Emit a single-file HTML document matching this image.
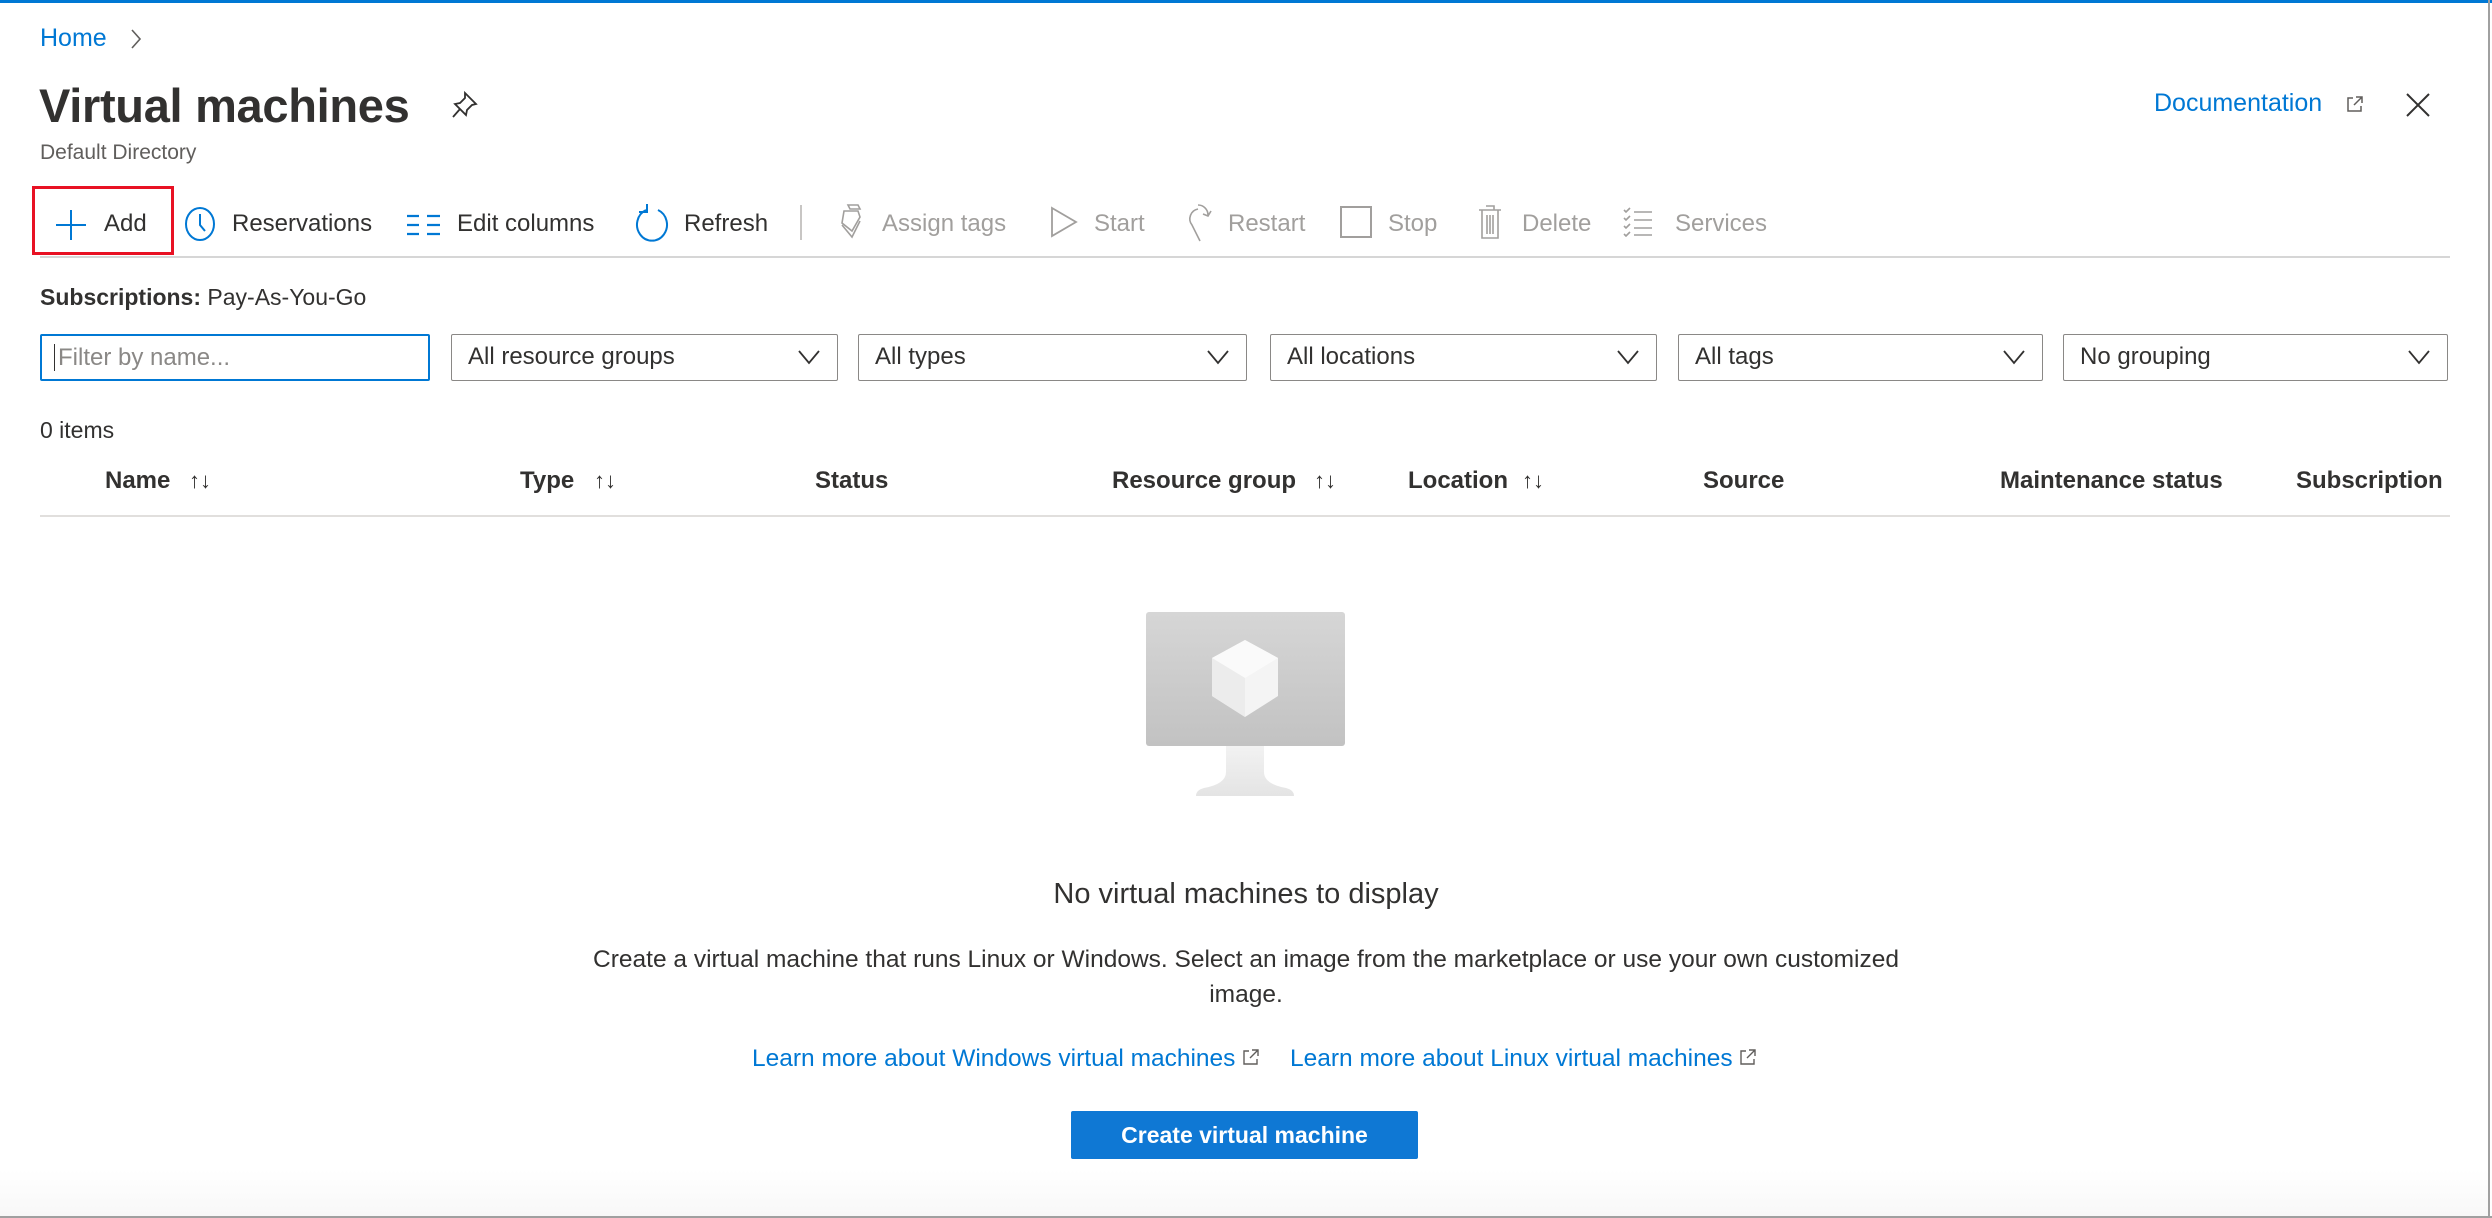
<!DOCTYPE html>
<html><head><meta charset="utf-8"><style>
*{margin:0;padding:0;box-sizing:border-box}
body{width:2492px;height:1218px;background:#fff;font-family:"Liberation Sans",sans-serif;color:#323130;position:relative;overflow:hidden}
.a{position:absolute;white-space:nowrap}
.tb{font-size:24px;top:209px;line-height:30px}
.dis{color:#a19f9d}
.sel{position:absolute;top:334px;height:47px;border:1.5px solid #8a8886;border-radius:2px;font-size:24px;line-height:44px;padding-left:16px}
.sel svg{position:absolute;right:16px;top:14px}
.th{font-size:24px;font-weight:bold;top:466px;line-height:30px;color:#323130}
.ar{font-size:22px;font-weight:normal;top:466px;line-height:30px}
.lnk{color:#0078d4}
</style></head><body>
<div class="a" style="left:0;top:1170px;width:2490px;height:46px;background:linear-gradient(#fff,#f8f8f8)"></div>
<div class="a" style="left:0;top:0;width:2492px;height:3px;background:#0078d4"></div>
<div class="a" style="right:2px;top:0;width:2px;height:1218px;background:#a0a0a0"></div>
<div class="a" style="left:0;bottom:0;width:2492px;height:2px;background:#a0a0a0"></div>

<div class="a lnk" style="left:40px;top:24px;font-size:25px">Home</div>
<svg class="a" style="left:130px;top:28px" width="12" height="22"><path d="M2 2 L10 11 L2 20" fill="none" stroke="#605e5c" stroke-width="1.6"/></svg>
<div class="a" style="left:39px;top:78px;font-size:47px;font-weight:bold;color:#323130;letter-spacing:-0.3px">Virtual machines</div>
<svg class="a" style="left:450px;top:90px" width="30" height="30" viewBox="0 0 30 30"><path d="M15 3 L26 14 L22 15 L17 20 L16 25 L5 14 L10 13 L15 8 Z M10 19 L3 27" fill="none" stroke="#323130" stroke-width="1.8"/></svg>
<div class="a" style="left:40px;top:141px;font-size:21px;color:#605e5c">Default Directory</div>
<div class="a lnk" style="left:2154px;top:89px;font-size:25px">Documentation</div>
<svg class="a" style="left:2345px;top:94px" width="20" height="20"><path d="M8 4 H3 V17 H16 V12 M11 3 H17 V9 M17 3 L9 11" fill="none" stroke="#605e5c" stroke-width="1.5"/></svg>
<svg class="a" style="left:2405px;top:92px" width="26" height="26"><path d="M2 2 L24 24 M24 2 L2 24" stroke="#323130" stroke-width="2"/></svg>

<!-- toolbar -->
<div class="a" style="left:32px;top:186px;width:142px;height:69px;border:3.5px solid #e81123"></div>
<svg class="a" style="left:55px;top:209px" width="32" height="32"><path d="M16 1 V31 M1 16 H31" stroke="#0078d4" stroke-width="2"/></svg>
<div class="a tb" style="left:104px">Add</div>
<svg class="a" style="left:183px;top:206px" width="34" height="36"><ellipse cx="17" cy="18" rx="14" ry="16" fill="none" stroke="#0078d4" stroke-width="2"/><path d="M17 8 V19 L22 25" fill="none" stroke="#0078d4" stroke-width="2"/></svg>
<div class="a tb" style="left:232px">Reservations</div>
<svg class="a" style="left:407px;top:213px" width="34" height="24"><path d="M0 3 H12 M20 3 H33 M0 12 H12 M20 12 H33 M0 21 H12 M20 21 H33" stroke="#0078d4" stroke-width="2.2"/></svg>
<div class="a tb" style="left:457px">Edit columns</div>
<svg class="a" style="left:634px;top:203px" width="36" height="42"><path d="M12 7 A15 16 0 1 0 24 7" fill="none" stroke="#0078d4" stroke-width="2"/><path d="M13 1 V9 H5" fill="none" stroke="#0078d4" stroke-width="2"/></svg>
<div class="a tb" style="left:684px">Refresh</div>
<div class="a" style="left:800px;top:205px;width:1.5px;height:35px;background:#c8c6c4"></div>
<svg class="a" style="left:838px;top:203px" width="26" height="38"><path d="M10 2 L20 2 L22 6 L12 6 Z M6 8 L20 8 L22 14 L14 28 L4 20 Z M4 22 L14 34 L22 18" fill="none" stroke="#a19f9d" stroke-width="1.6"/></svg>
<div class="a tb dis" style="left:882px">Assign tags</div>
<svg class="a" style="left:1050px;top:206px" width="28" height="32"><path d="M2 2 L26 16 L2 30 Z" fill="none" stroke="#a19f9d" stroke-width="1.8"/></svg>
<div class="a tb dis" style="left:1094px">Start</div>
<svg class="a" style="left:1186px;top:203px" width="28" height="40"><path d="M12 6 A10 10 0 0 0 6 22 L14 38" fill="none" stroke="#a19f9d" stroke-width="1.6"/><path d="M12 2 A10 10 0 0 1 22 12 M17 11 L22 13 L25 8" fill="none" stroke="#a19f9d" stroke-width="1.6"/></svg>
<div class="a tb dis" style="left:1228px">Restart</div>
<div class="a" style="left:1340px;top:206px;width:32px;height:32px;border:2px solid #a19f9d"></div>
<div class="a tb dis" style="left:1388px">Stop</div>
<svg class="a" style="left:1477px;top:204px" width="26" height="36"><path d="M9 2 H17 V6 M2 6 H24 M5 6 V34 H21 V6 M10 11 V30 M13 11 V30 M16 11 V30" fill="none" stroke="#a19f9d" stroke-width="1.6"/></svg>
<div class="a tb dis" style="left:1522px">Delete</div>
<svg class="a" style="left:1623px;top:207px" width="30" height="30"><path d="M1 3 L3 5 L7 1 M1 11 L3 13 L7 9 M1 19 L3 21 L7 17 M1 27 L3 29 L7 25 M11 5 H29 M11 13 H29 M11 21 H29 M11 28 H29" fill="none" stroke="#a19f9d" stroke-width="1.6"/></svg>
<div class="a tb dis" style="left:1675px">Services</div>
<div class="a" style="left:40px;top:256px;width:2410px;height:2px;background:#d6d6d6"></div>

<div class="a" style="left:40px;top:284px;font-size:23px"><b>Subscriptions:</b> Pay-As-You-Go</div>

<div class="sel" style="left:40px;width:390px;border:2px solid #0078d4;color:#8a8886"><span style="border-left:1.5px solid #323130;margin-left:-4px;padding-left:3px">Filter by name...</span></div>
<div class="sel" style="left:451px;width:387px">All resource groups<svg width="24" height="16"><path d="M2 2 L12 14 L22 2" fill="none" stroke="#323130" stroke-width="1.8"/></svg></div>
<div class="sel" style="left:858px;width:389px">All types<svg width="24" height="16"><path d="M2 2 L12 14 L22 2" fill="none" stroke="#323130" stroke-width="1.8"/></svg></div>
<div class="sel" style="left:1270px;width:387px">All locations<svg width="24" height="16"><path d="M2 2 L12 14 L22 2" fill="none" stroke="#323130" stroke-width="1.8"/></svg></div>
<div class="sel" style="left:1678px;width:365px">All tags<svg width="24" height="16"><path d="M2 2 L12 14 L22 2" fill="none" stroke="#323130" stroke-width="1.8"/></svg></div>
<div class="sel" style="left:2063px;width:385px">No grouping<svg width="24" height="16"><path d="M2 2 L12 14 L22 2" fill="none" stroke="#323130" stroke-width="1.8"/></svg></div>

<div class="a" style="left:40px;top:417px;font-size:23px">0 items</div>

<div class="a th" style="left:105px">Name</div><div class="a ar" style="left:189px">↑↓</div>
<div class="a th" style="left:520px">Type</div><div class="a ar" style="left:594px">↑↓</div>
<div class="a th" style="left:815px">Status</div>
<div class="a th" style="left:1112px">Resource group</div><div class="a ar" style="left:1314px">↑↓</div>
<div class="a th" style="left:1408px">Location</div><div class="a ar" style="left:1522px">↑↓</div>
<div class="a th" style="left:1703px">Source</div>
<div class="a th" style="left:2000px">Maintenance status</div>
<div class="a th" style="left:2296px">Subscription</div>
<div class="a" style="left:40px;top:515px;width:2410px;height:1.5px;background:#e1dfdd"></div>

<!-- monitor -->
<svg class="a" style="left:1146px;top:612px" width="200" height="185" viewBox="0 0 200 185">
<defs><linearGradient id="g" x1="0" y1="0" x2="0" y2="1"><stop offset="0" stop-color="#d6d6d6"/><stop offset="1" stop-color="#c2c2c2"/></linearGradient>
<linearGradient id="s" x1="0" y1="0" x2="0" y2="1"><stop offset="0" stop-color="#f2f2f2"/><stop offset="1" stop-color="#e4e4e4"/></linearGradient></defs>
<rect x="0" y="0" width="199" height="134" rx="3" fill="url(#g)"/>
<path d="M80 134 H118 V160 Q118 172 140 176 Q148 178 148 184 H50 Q50 178 58 176 Q80 172 80 160 Z" fill="url(#s)"/>
<path d="M99 28 L132 46 V84 L99 105 L66 84 V46 Z" fill="#f4f4f4"/>
<path d="M99 28 L132 46 L99 66 L66 46 Z" fill="#fafafa"/>
<path d="M66 46 L99 66 L99 105 L66 84 Z" fill="#ececec"/>
</svg>

<div class="a" style="left:0;width:2492px;text-align:center;top:878px;font-size:29px;color:#323130">No virtual machines to display</div>
<div class="a" style="left:566px;width:1360px;white-space:normal;text-align:center;top:942px;font-size:24.5px;line-height:35px;color:#323130">Create a virtual machine that runs Linux or Windows. Select an image from the marketplace or use your own customized image.</div>
<div class="a lnk" style="left:752px;top:1045px;font-size:24.5px">Learn more about Windows virtual machines <svg width="18" height="18" style="vertical-align:0"><path d="M7 3 H2 V16 H15 V11 M10 2 H16 V8 M16 2 L8 10" fill="none" stroke="#605e5c" stroke-width="1.4"/></svg></div>
<div class="a lnk" style="left:1290px;top:1045px;font-size:24.5px">Learn more about Linux virtual machines <svg width="18" height="18" style="vertical-align:0"><path d="M7 3 H2 V16 H15 V11 M10 2 H16 V8 M16 2 L8 10" fill="none" stroke="#605e5c" stroke-width="1.4"/></svg></div>

<div class="a" style="left:1071px;top:1111px;width:347px;height:48px;background:#0f78d4;border-radius:2px;color:#fff;font-weight:bold;font-size:23px;text-align:center;line-height:48px">Create virtual machine</div>
</body></html>
